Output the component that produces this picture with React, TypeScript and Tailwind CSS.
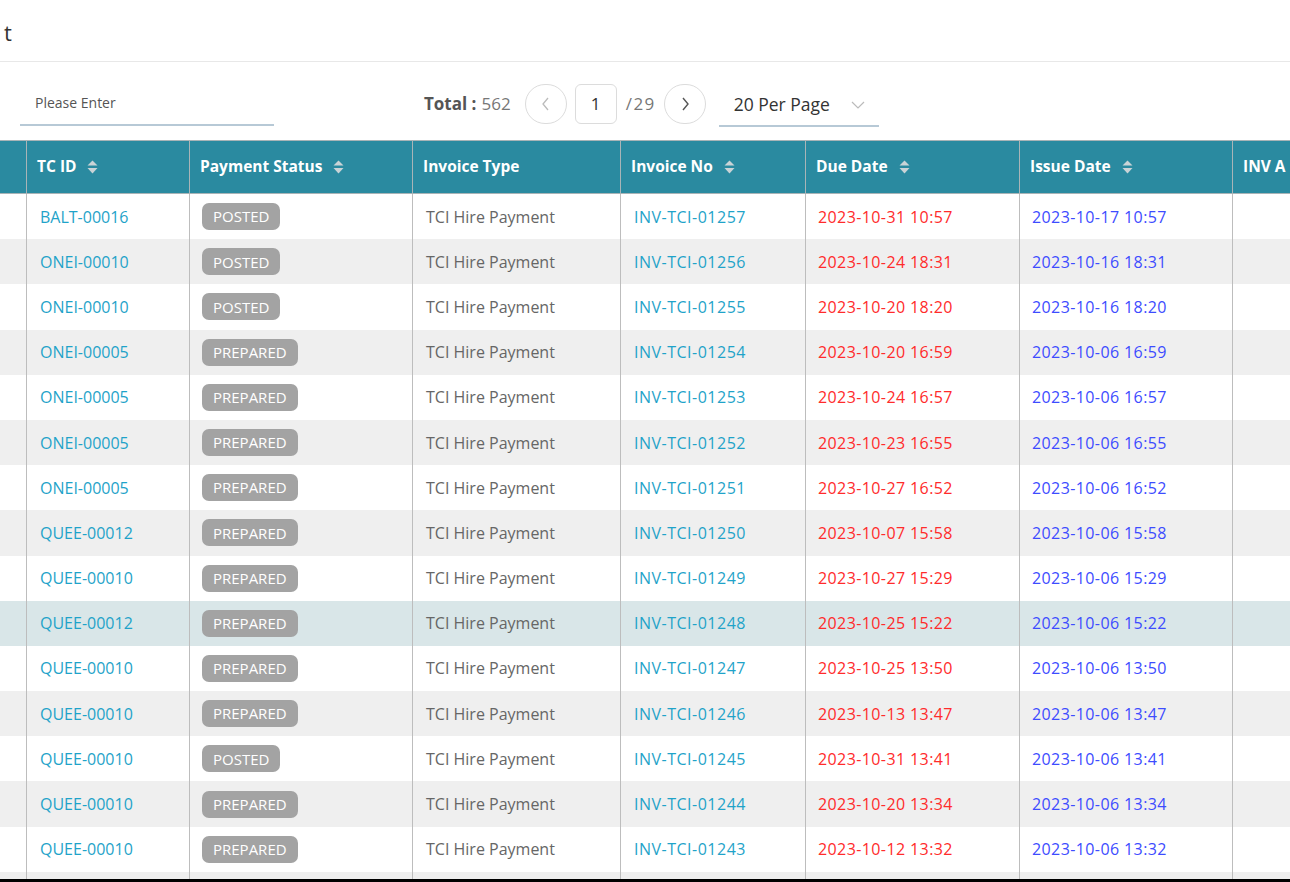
import React from "react";

const rows: [string, string, string, string, string][] = [
  ["BALT-00016", "POSTED", "INV-TCI-01257", "2023-10-31 10:57", "2023-10-17 10:57"],
  ["ONEI-00010", "POSTED", "INV-TCI-01256", "2023-10-24 18:31", "2023-10-16 18:31"],
  ["ONEI-00010", "POSTED", "INV-TCI-01255", "2023-10-20 18:20", "2023-10-16 18:20"],
  ["ONEI-00005", "PREPARED", "INV-TCI-01254", "2023-10-20 16:59", "2023-10-06 16:59"],
  ["ONEI-00005", "PREPARED", "INV-TCI-01253", "2023-10-24 16:57", "2023-10-06 16:57"],
  ["ONEI-00005", "PREPARED", "INV-TCI-01252", "2023-10-23 16:55", "2023-10-06 16:55"],
  ["ONEI-00005", "PREPARED", "INV-TCI-01251", "2023-10-27 16:52", "2023-10-06 16:52"],
  ["QUEE-00012", "PREPARED", "INV-TCI-01250", "2023-10-07 15:58", "2023-10-06 15:58"],
  ["QUEE-00010", "PREPARED", "INV-TCI-01249", "2023-10-27 15:29", "2023-10-06 15:29"],
  ["QUEE-00012", "PREPARED", "INV-TCI-01248", "2023-10-25 15:22", "2023-10-06 15:22"],
  ["QUEE-00010", "PREPARED", "INV-TCI-01247", "2023-10-25 13:50", "2023-10-06 13:50"],
  ["QUEE-00010", "PREPARED", "INV-TCI-01246", "2023-10-13 13:47", "2023-10-06 13:47"],
  ["QUEE-00010", "POSTED", "INV-TCI-01245", "2023-10-31 13:41", "2023-10-06 13:41"],
  ["QUEE-00010", "PREPARED", "INV-TCI-01244", "2023-10-20 13:34", "2023-10-06 13:34"],
  ["QUEE-00010", "PREPARED", "INV-TCI-01243", "2023-10-12 13:32", "2023-10-06 13:32"],
];

function SortIcon() {
  return (
    <svg width="11" height="14" viewBox="0 0 11 14" className="ml-[11px] shrink-0">
      <path d="M5.5 0.5 L10.5 5.5 L0.5 5.5 Z" fill="#c9d3d6" />
      <path d="M5.5 13.5 L10.5 8 L0.5 8 Z" fill="#c9d3d6" />
    </svg>
  );
}

function HeadCell({ w, label, sort, last }: { w: string; label?: string; sort?: boolean; last?: boolean }) {
  return (
    <div className={`${w} ${last ? "flex-1 min-w-0 overflow-hidden" : "shrink-0 border-r border-[#a9b4b7]"} flex items-center pl-[10px] h-full`}>
      {label && <span className="text-white font-bold text-[15.5px] whitespace-nowrap">{label}</span>}
      {sort && <SortIcon />}
    </div>
  );
}

export default function App() {
  return (
    <div
      className="h-[882px] w-[1290px] overflow-hidden flex flex-col bg-white"
      style={{ fontFamily: '"Open Sans", "Noto Sans", sans-serif' }}
    >
      <div className="h-[62px] shrink-0 flex items-center pl-[4px] border-b border-[#e8e8e8]">
        <span className="text-[22px] text-[#333] leading-none mt-[3px]">t</span>
      </div>

      <div className="h-[78px] shrink-0 flex items-center pt-[6px]">
        <div className="ml-[20px] w-[254px] h-[44px] border-b-2 border-[#b7c9d6] flex items-center pl-[15px] mt-[-1px]">
          <span className="text-[14px] text-[#555]">Please Enter</span>
        </div>
        <div className="ml-[150px] flex items-center">
          <span className="text-[17px] text-[#555] font-bold">Total :</span>
          <span className="text-[17px] text-[#777] ml-[5px]">562</span>
          <div className="ml-[14px] w-[42px] h-[40px] rounded-full border border-[#dcdcdc] flex items-center justify-center">
            <svg width="12" height="14" viewBox="0 0 12 14"><path d="M8 1 L3 7 L8 13" fill="none" stroke="#bbb" strokeWidth="1.3" /></svg>
          </div>
          <div className="ml-[8px] w-[42px] h-[40px] rounded-md border border-[#dcdcdc] flex items-center justify-center">
            <span className="text-[17px] text-[#333]">1</span>
          </div>
          <span className="ml-[9px] w-[33px] text-[17px] text-[#777] tracking-[1.5px]">/29</span>
          <div className="ml-[5px] w-[42px] h-[40px] rounded-full border border-[#dcdcdc] flex items-center justify-center">
            <svg width="12" height="14" viewBox="0 0 12 14"><path d="M4 1 L9 7 L4 13" fill="none" stroke="#555" strokeWidth="1.4" /></svg>
          </div>
          <div className="ml-[13px] w-[160px] h-[42px] border-b-2 border-[#b7c9d6] flex items-center pl-[15px] mt-[3px]">
            <span className="text-[17.5px] text-[#333]">20 Per Page</span>
            <svg width="14" height="10" viewBox="0 0 14 10" className="ml-auto mr-[14px]"><path d="M1 2 L7 8 L13 2" fill="none" stroke="#bbb" strokeWidth="1.2" /></svg>
          </div>
        </div>
      </div>

      <div className="flex-1 overflow-hidden border-t border-[#a9b4b7] flex flex-col min-h-0">
        <div className="h-[53px] shrink-0 bg-[#2a8aa0] flex border-b border-[#a9b4b7]">
          <HeadCell w="w-[27px]" />
          <HeadCell w="w-[163px]" label="TC ID" sort />
          <HeadCell w="w-[223px]" label="Payment Status" sort />
          <HeadCell w="w-[208px]" label="Invoice Type" />
          <HeadCell w="w-[185px]" label="Invoice No" sort />
          <HeadCell w="w-[214px]" label="Due Date" sort />
          <HeadCell w="w-[213px]" label="Issue Date" sort />
          <HeadCell w="w-[58px]" label="INV A" last />
        </div>
        {rows.map((r, i) => {
          const bg = i === 9 ? "bg-[#d9e6e8]" : i % 2 === 1 ? "bg-[#efefef]" : "bg-white";
          return (
            <div key={i} className={`h-[45.2px] shrink-0 flex ${bg} text-[16px]`}>
              <div className="w-[27px] shrink-0 border-r border-[#bdbdbd]" />
              <div className="w-[163px] shrink-0 border-r border-[#bdbdbd] flex items-center pl-[13px] text-[#1fa3c9]">{r[0]}</div>
              <div className="w-[223px] shrink-0 border-r border-[#bdbdbd] flex items-center pl-[12px]">
                <span className="bg-[#a3a3a3] text-white rounded-[7px] h-[27px] px-[11px] flex items-center text-[15px]">{r[1]}</span>
              </div>
              <div className="w-[208px] shrink-0 border-r border-[#bdbdbd] flex items-center pl-[13px] text-[#666]">TCI Hire Payment</div>
              <div className="w-[185px] shrink-0 border-r border-[#bdbdbd] flex items-center pl-[13px] text-[#1fa3c9] tracking-[0.5px]">{r[2]}</div>
              <div className="w-[214px] shrink-0 border-r border-[#bdbdbd] flex items-center pl-[12px] text-[#ff2b2b] tracking-[0.4px]">{r[3]}</div>
              <div className="w-[213px] shrink-0 border-r border-[#bdbdbd] flex items-center pl-[12px] text-[#3d4cff] tracking-[0.4px]">{r[4]}</div>
              <div className="flex-1" />
            </div>
          );
        })}
        <div className="h-[45.2px] shrink-0 flex bg-[#efefef]">
          <div className="w-[27px] shrink-0 border-r border-[#bdbdbd]" />
          <div className="w-[163px] shrink-0 border-r border-[#bdbdbd]" />
          <div className="w-[223px] shrink-0 border-r border-[#bdbdbd]" />
          <div className="w-[208px] shrink-0 border-r border-[#bdbdbd]" />
          <div className="w-[185px] shrink-0 border-r border-[#bdbdbd]" />
          <div className="w-[214px] shrink-0 border-r border-[#bdbdbd]" />
          <div className="w-[213px] shrink-0 border-r border-[#bdbdbd]" />
        </div>
      </div>
      <div className="h-[3px] shrink-0 bg-black" />
    </div>
  );
}
